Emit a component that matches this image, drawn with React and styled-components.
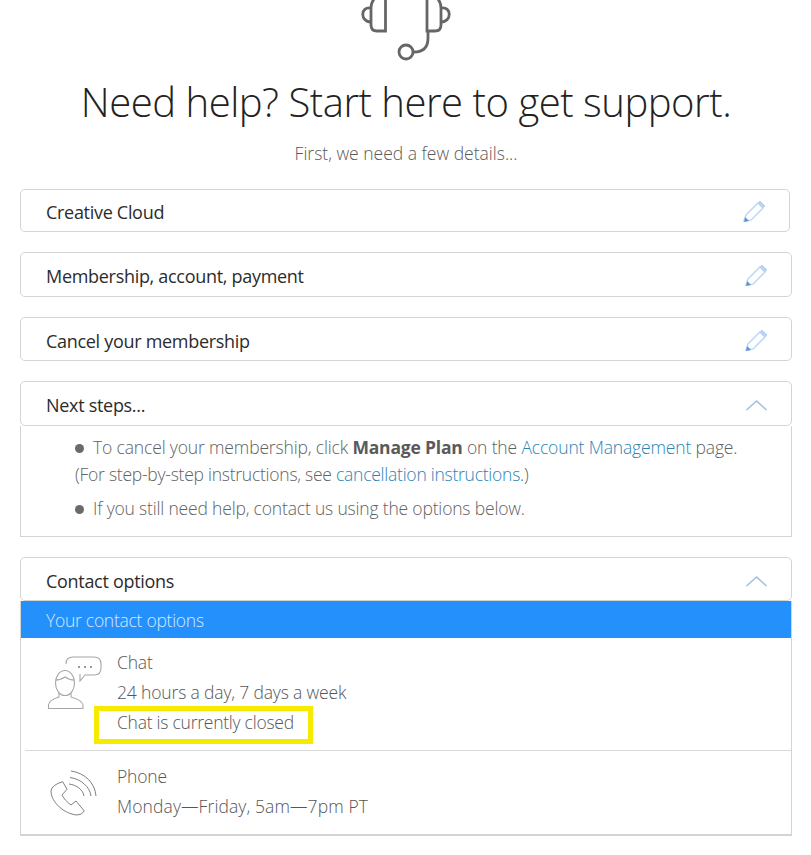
import React from 'react';
import styled, {createGlobalStyle} from 'styled-components';

const GlobalStyle = createGlobalStyle`
  html, body {
    margin: 0;
    padding: 0;
    background: #ffffff;
    font-family: "Open Sans", "Noto Sans", sans-serif;
    overflow: hidden;
  }
`;

const Page = styled.div`
  width: 811px;
  height: 855px;
  padding: 0 19px 0 20px;
  box-sizing: border-box;
`;

const Hero = styled.div`
  height: 62px;
  display: flex;
  justify-content: center;
  align-items: flex-end;
  overflow: hidden;
`;

const Title = styled.h1`
  margin: 14px 0 0;
  height: 52px;
  line-height: 52px;
  font-size: 40px;
  font-weight: 300;
  letter-spacing: -0.46px;
  color: #222222;
  text-align: center;
  white-space: nowrap;
`;

const Subtitle = styled.p`
  margin: 13px 0 0;
  height: 24px;
  line-height: 24px;
  font-size: 17.5px;
  font-weight: 300;
  color: #5a5a5a;
  text-align: center;
`;

const Stack = styled.div`
  margin-top: 24px;
  display: flex;
  flex-direction: column;
  gap: 20px;
`;

const Section = styled.section`
  display: flex;
  flex-direction: column;
`;

const Bar = styled.div`
  box-sizing: border-box;
  height: ${props => props.$height}px;
  margin-right: ${props => (props.$short ? 2 : 0)}px;
  padding: ${props => props.$drop}px 23px 0 25px;
  display: flex;
  align-items: center;
  justify-content: space-between;
  background: #ffffff;
  border: 1px solid #d4d4d4;
  border-radius: 5px;
`;

const BarLabel = styled.span`
  font-size: 18px;
  color: #2c2c2c;
  letter-spacing: -0.3px;
`;

const Panel = styled.div`
  box-sizing: border-box;
  height: 111px;
  padding: 8px 20px 0 54px;
  border: 1px solid #d4d4d4;
  border-top: none;
  font-size: 17.5px;
  font-weight: 300;
  line-height: 27px;
  color: #626262;
`;

const PanelLine = styled.div`
  margin-bottom: ${props => props.$gap}px;
  letter-spacing: ${props => props.$spacing}px;
  white-space: nowrap;
`;

const Bullet = styled.span`
  display: inline-block;
  width: 9px;
  height: 9px;
  margin: 0 9px 2px 0;
  border-radius: 50%;
  background: #6a6a6a;
  vertical-align: middle;
`;

const Strong = styled.b`
  font-weight: 700;
  color: #5a5a5a;
  letter-spacing: -0.2px;
`;

const TextLink = styled.a`
  color: #2b84b5;
`;

const ContactBody = styled.div`
  border: 1px solid #d4d4d4;
  border-top: none;
  border-bottom: 2px solid #d4d4d4;
  height: 235px;
  box-sizing: border-box;
`;

const BlueBar = styled.div`
  height: 37px;
  padding-left: 25px;
  display: flex;
  align-items: center;
  background: #2490fc;
  color: #d7ebff;
  font-size: 17.5px;
  font-weight: 300;
  letter-spacing: -0.27px;
`;

const Option = styled.div`
  box-sizing: border-box;
  height: ${props => props.$height}px;
  margin-left: 4px;
  padding-top: ${props => props.$pad}px;
  display: flex;
  border-bottom: ${props => (props.$divider ? '1px solid #d9d9d9' : 'none')};
`;

const OptionIcon = styled.div`
  width: 92px;
  flex: none;
  padding: ${props => props.$top}px 0 0 ${props => props.$left}px;
  box-sizing: border-box;
`;

const OptionText = styled.div`
  font-size: 17.5px;
  font-weight: 300;
  line-height: 30px;
  color: #565656;
`;

const Line = styled.div`
  position: relative;
  white-space: nowrap;
  letter-spacing: ${props => props.$spacing}px;
`;

const Highlight = styled.span`
  position: absolute;
  left: -23px;
  top: -1px;
  width: 219px;
  height: 38px;
  box-sizing: border-box;
  border: 5px solid #f6ea00;
`;

const Headset = () => (
  <svg width="100" height="62" viewBox="0 0 100 62" fill="none" stroke="#666666" strokeWidth="2.8">
    <path d="M18 -1 Q15 3 15 8 V25 Q15 31 21 31 H29.5 V-2" />
    <path d="M82 -1 Q85 3 85 8 V25 Q85 31 79 31 H71 V-2" />
    <path d="M15 8 C4 6 4 22 15 22" />
    <path d="M85 8 C96 6 96 22 85 22" />
    <path d="M72 32 V38 Q72 52 58 52 H57" />
    <circle cx="50" cy="52" r="7" />
  </svg>
);

const Pencil = () => (
  <svg width="24" height="24" viewBox="0 0 24 24" fill="none">
    <path d="M2 21 L4 15 L16 3 L21 8 L9 20 Z" fill="#ffffff" stroke="#c2daf7" strokeWidth="1.6" />
    <path d="M16 3 L18 1 L23 6 L21 8 Z" fill="#b9d3f4" stroke="#b9d3f4" strokeWidth="1" />
    <path d="M2 22 L3.2 17 L7 21 Z" fill="#5e93dc" />
  </svg>
);

const Chevron = () => (
  <svg width="22" height="12" viewBox="0 0 22 12" fill="none" stroke="#a3bde0" strokeWidth="1.5">
    <path d="M0.5 11 L10.5 2 L20.5 11" />
  </svg>
);

const ChatPerson = () => (
  <svg width="56" height="56" viewBox="0 0 56 56" fill="none" stroke="#a6a6a6" strokeWidth="1.1">
    <path d="M19 9 Q19 2 26 2 H47 Q54 2 54 9 V13 Q54 20 47 20 H38 L33 26 V19" />
    <circle cx="32" cy="12" r="1" fill="#777777" stroke="none" />
    <circle cx="38" cy="12" r="1" fill="#777777" stroke="none" />
    <circle cx="44" cy="12" r="1" fill="#777777" stroke="none" />
    <ellipse cx="18" cy="28" rx="9.5" ry="12.5" fill="#ffffff" />
    <path d="M8.5 25 Q14 25 18 22 Q22 25 27.5 25" />
    <path d="M12 38 V42 Q2 45 1.5 50 V53.5 H36 V50 Q35 45 24 42 V38" />
  </svg>
);

const PhoneWaves = () => (
  <svg width="50" height="48" viewBox="0 0 50 48" fill="none" stroke="#808080" strokeWidth="1">
    <path d="M13.7 11.7 L18 19.3 L13 25 C15 29 18 32 22 35 L27 31 L35.3 41 Q33 45 28 45 C15 44 2 32 2 21 Q2.5 15 13.7 11.7 Z" />
    <path d="M22 1 C36 3 46 13 47 26" />
    <path d="M21 7.5 C32 9 41 17 42 26" />
    <path d="M20 14 C28 15 34 20 35 26" />
  </svg>
);

const steps = [
  {label: 'Creative Cloud', height: 43, short: true, drop: 2},
  {label: 'Membership, account, payment', height: 45, drop: 2},
  {label: 'Cancel your membership', height: 44, drop: 3},
];

export default function App() {
  return (
    <Page>
      <GlobalStyle />
      <Hero>
        <Headset />
      </Hero>
      <Title>Need help? Start here to get support.</Title>
      <Subtitle>First, we need a few details...</Subtitle>
      <Stack>
        {steps.map(step => (
          <Bar key={step.label} $height={step.height} $short={step.short} $drop={step.drop}>
            <BarLabel>{step.label}</BarLabel>
            <Pencil />
          </Bar>
        ))}
        <Section>
          <Bar $height={45} $drop={2}>
            <BarLabel>Next steps...</BarLabel>
            <Chevron />
          </Bar>
          <Panel>
            <PanelLine $gap={0} $spacing={-0.15}>
              <Bullet />To cancel your membership, click <Strong>Manage Plan</Strong> on the{' '}
              <TextLink>Account Management</TextLink> page.
            </PanelLine>
            <PanelLine $gap={7} $spacing={-0.25}>
              (For step-by-step instructions, see <TextLink>cancellation instructions</TextLink>.)
            </PanelLine>
            <PanelLine $gap={0} $spacing={-0.18}>
              <Bullet />If you still need help, contact us using the options below.
            </PanelLine>
          </Panel>
        </Section>
        <Section>
          <Bar $height={44} $drop={3}>
            <BarLabel>Contact options</BarLabel>
            <Chevron />
          </Bar>
          <ContactBody>
            <BlueBar>Your contact options</BlueBar>
            <Option $height={113} $pad={9} $divider>
              <OptionIcon $top={8} $left={22}>
                <ChatPerson />
              </OptionIcon>
              <OptionText>
                <Line $spacing={-0.16}>Chat</Line>
                <Line $spacing={-0.16}>24 hours a day, 7 days a week</Line>
                <Line $spacing={-0.25}>
                  Chat is currently closed
                  <Highlight />
                </Line>
              </OptionText>
            </Option>
            <Option $height={82} $pad={10}>
              <OptionIcon $top={9} $left={24}>
                <PhoneWaves />
              </OptionIcon>
              <OptionText>
                <Line $spacing={-0.16}>Phone</Line>
                <Line $spacing={0.1}>Monday—Friday, 5am—7pm PT</Line>
              </OptionText>
            </Option>
          </ContactBody>
        </Section>
      </Stack>
    </Page>
  );
}
